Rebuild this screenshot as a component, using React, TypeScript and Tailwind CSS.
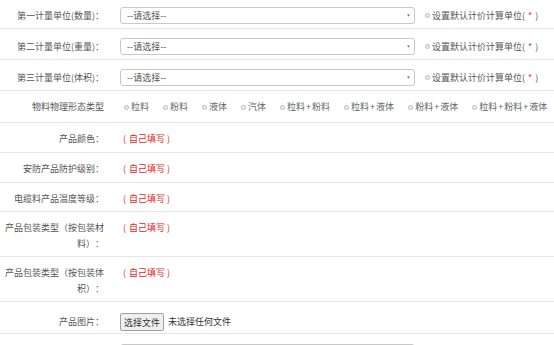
import React from "react";

const font = { fontFamily: '"Noto Sans CJK SC", "Noto Sans", sans-serif' };

function Radio() {
  return <span className="inline-block w-[5px] h-[5px] rounded-full border border-[#bdbdbd] bg-[#ececec] mr-[2px] shrink-0" />;
}

function SelectBox() {
  return (
    <div className="w-[295px] h-[17px] border border-[#c8c8c8] rounded-[3px] bg-white flex items-center pl-[6px] pr-[4px] text-[9px] text-[#555] shrink-0">
      <span className="flex-1 leading-none whitespace-nowrap">--请选择--</span>
      <svg width="3" height="3" viewBox="0 0 3 3" className="shrink-0">
        <path d="M0 0.5 L3 0.5 L1.5 2.5 Z" fill="#666" />
      </svg>
    </div>
  );
}

function Label({ children }: { children: React.ReactNode }) {
  return (
    <div className="w-[104px] pl-[3px] shrink-0 text-right text-[9px] leading-[16px] text-[#555]">{children}</div>
  );
}

function SelectRow({ label, first }: { label: string; first?: boolean }) {
  return (
    <div className={`flex items-center border-b border-[#e6e6e6] ${first ? "pt-[7px]" : "pt-[9px]"} pb-[4px]`}>
      <Label>{label}</Label>
      <div className="ml-[16px] flex items-center">
        <SelectBox />
        <div className="ml-[10px] flex items-center text-[9px] text-[#555] leading-[16px] whitespace-nowrap">
          <Radio />
          <span>设置默认计价计算单位(</span>
          <span className="text-[#e53935] mx-[3px]">*</span>
          <span>)</span>
        </div>
      </div>
    </div>
  );
}

function TextRow({ label, pb = "pb-[5px]" }: { label: string; pb?: string }) {
  return (
    <div className={`flex items-start border-b border-[#e6e6e6] pt-[8px] ${pb}`}>
      <Label>{label}</Label>
      <div className="ml-[16px] text-[9px] leading-[16px] text-[#f02020] whitespace-nowrap">
        <span className="ml-[3px] mr-[3px]">(</span>自己填写<span className="ml-[2px]">)</span>
      </div>
    </div>
  );
}

const kinds = ["粒料", "粉料", "液体", "汽体", "粒料+粉料", "粒料+液体", "粉料+液体", "粒料+粉料+液体"];

export default function App() {
  return (
    <div className="w-[554px] h-[345px] overflow-hidden bg-white [text-spacing-trim:space-all]" style={font}>
      <SelectRow label="第一计量单位(数量)：" first />
      <SelectRow label="第二计量单位(重量)：" />
      <SelectRow label="第三计量单位(体积)：" />
      <div className="flex items-start border-b border-[#e6e6e6] pt-[8px] pb-[7px]">
        <Label>物料物理形态类型</Label>
        <div className="ml-[20px] flex items-center text-[9px] leading-[16px] text-[#666] whitespace-nowrap shrink-0">
          {kinds.map((k) => (
            <div key={k} className="flex items-center mr-[14px] shrink-0">
              <Radio />
              <span>
                {k.split("+").map((p, i) => (
                  <React.Fragment key={i}>
                    {i > 0 && <span className="px-[1px]">+</span>}
                    {p}
                  </React.Fragment>
                ))}
              </span>
            </div>
          ))}
        </div>
      </div>
      <TextRow label="产品颜色：" />
      <TextRow label="安防产品防护级别：" />
      <TextRow label="电缆料产品温度等级：" pb="pb-[4px]" />
      <TextRow label="产品包装类型（按包装材料）：" pb="pb-[4px]" />
      <TextRow label="产品包装类型（按包装体积）：" pb="pb-[4px]" />
      <div className="flex items-center border-b border-[#e6e6e6] pt-[11px] pb-[2px]">
        <Label>产品图片：</Label>
        <div className="ml-[16px] flex items-center text-[9px] text-[#333] whitespace-nowrap">
          <span className="h-[18px] px-[3px] flex items-center border border-[#a0a0a0] rounded-[2px] bg-[#efefef] leading-none">选择文件</span>
          <span className="ml-[4px]">未选择任何文件</span>
        </div>
      </div>
      <div className="flex items-center pt-[10px] pb-[4px]">
        <Label>{"\u00a0"}</Label>
        <div className="ml-[16px]">
          <SelectBox />
        </div>
      </div>
    </div>
  );
}
